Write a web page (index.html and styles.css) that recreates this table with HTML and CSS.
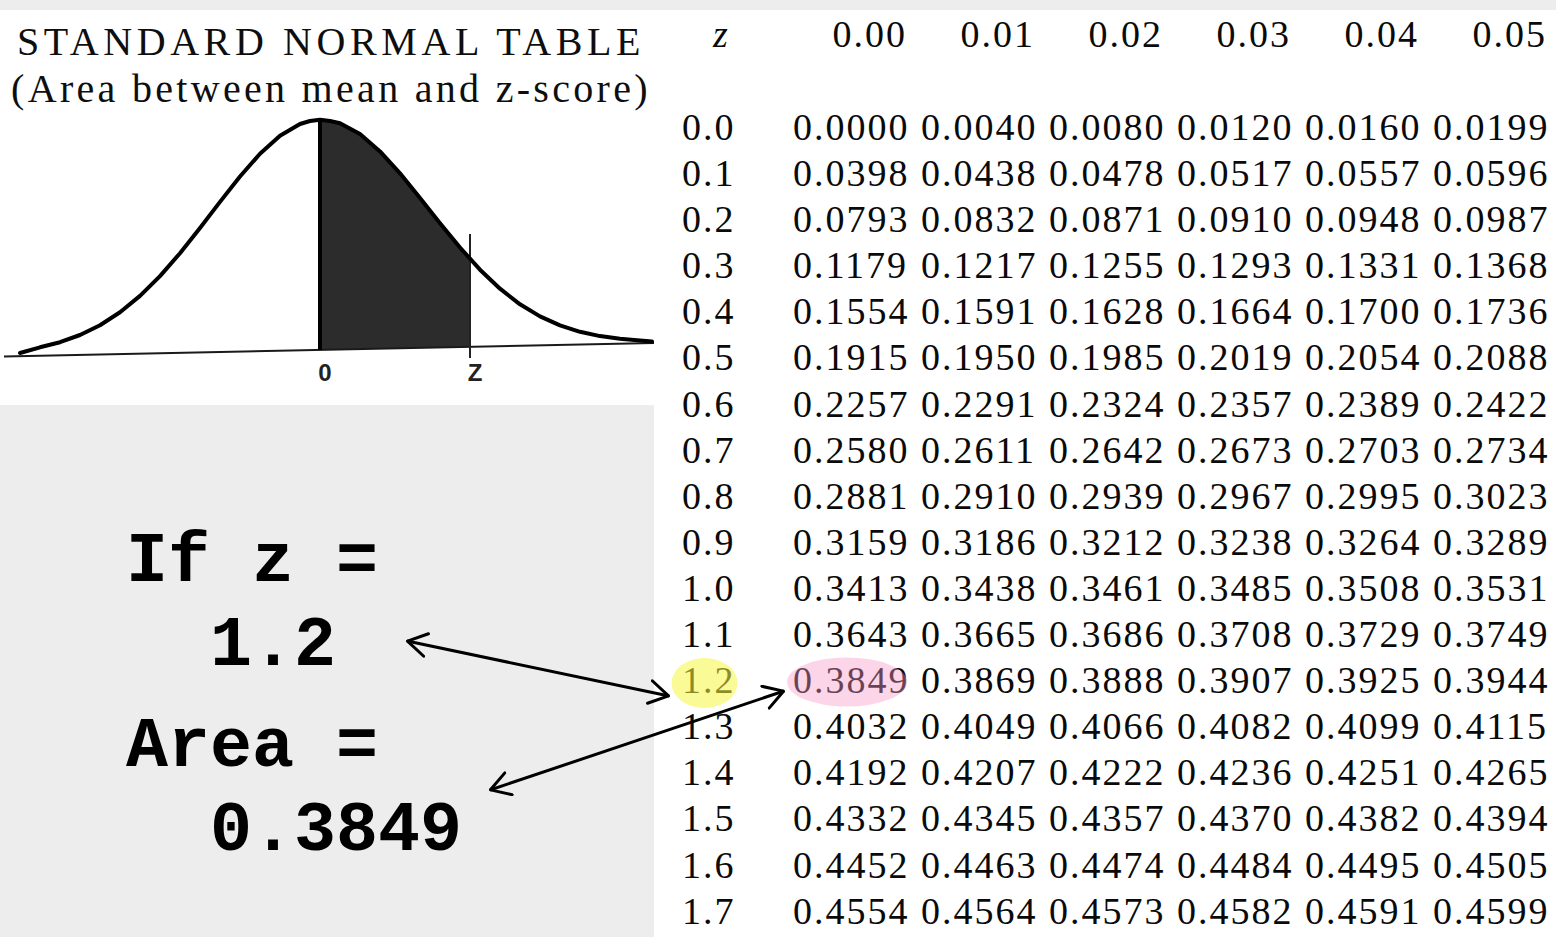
FILE: index.html
```html
<!DOCTYPE html>
<html lang="en">
<head>
    <meta charset="UTF-8">
    <meta name="viewport" content="width=device-width, initial-scale=1.0">
    <title>Standard Normal Table</title>
    <link rel="stylesheet" href="styles.css">
</head>
<body>
    <div class="page">
        <div class="left">
            <div class="figure">
                <h1 class="title">
                    <span class="title-main">STANDARD NORMAL TABLE</span>
                    <span class="title-sub">(Area between mean and z-score)</span>
                </h1>
                <svg class="curve" width="654" height="293" viewBox="0 112 654 293">
                    <!-- shaded area between 0 and z -->
                    <path class="shade" d="M320,349.7 L320,119.7 L340,123.2 L360,134.1 L380,151.4 L400,173.3 L420,197.9 L440,223.2 L460,247.6 L470,259 L470,346.7 Z"/>
                    <line class="axis" x1="4" y1="356.5" x2="654" y2="343"/>
                    <line class="mean-line" x1="320" y1="121" x2="320" y2="350"/>
                    <line class="z-line" x1="470" y1="234" x2="470" y2="358"/>
                    <polyline class="bell" points="20,353 40,347.3 60,342.2 80,335 100,325.2 120,312.3 140,295.9 160,276.1 180,253.2 200,228 220,201.9 240,176.5 260,153.8 280,135.7 300,124 310,121 320,119.7 330,121 340,123.2 360,134.1 380,151.4 400,173.3 420,197.9 440,223.2 460,247.6 480,269.7 500,288.7 520,304.3 540,316.4 560,325.4 580,331.8 600,336.1 620,338.8 640,340.4 652,341.5"/>
                    <text class="axis-label" x="325" y="381">0</text>
                    <text class="axis-label" x="475" y="381">Z</text>
                </svg>
            </div>
            <div class="example">
                <p class="example-group">If z =
  1.2</p>
                <p class="example-group">Area =
  0.3849</p>
            </div>
        </div>

        <div class="right">
            <div class="ztable">
                <div class="row head">
                    <span class="zlabel">z</span>
                    <span>0.00</span><span>0.01</span><span>0.02</span><span>0.03</span><span>0.04</span><span>0.05</span>
                </div>
                <div class="row"><span>0.0</span><span>0.0000</span><span>0.0040</span><span>0.0080</span><span>0.0120</span><span>0.0160</span><span>0.0199</span></div>
                <div class="row"><span>0.1</span><span>0.0398</span><span>0.0438</span><span>0.0478</span><span>0.0517</span><span>0.0557</span><span>0.0596</span></div>
                <div class="row"><span>0.2</span><span>0.0793</span><span>0.0832</span><span>0.0871</span><span>0.0910</span><span>0.0948</span><span>0.0987</span></div>
                <div class="row"><span>0.3</span><span>0.1179</span><span>0.1217</span><span>0.1255</span><span>0.1293</span><span>0.1331</span><span>0.1368</span></div>
                <div class="row"><span>0.4</span><span>0.1554</span><span>0.1591</span><span>0.1628</span><span>0.1664</span><span>0.1700</span><span>0.1736</span></div>
                <div class="row"><span>0.5</span><span>0.1915</span><span>0.1950</span><span>0.1985</span><span>0.2019</span><span>0.2054</span><span>0.2088</span></div>
                <div class="row"><span>0.6</span><span>0.2257</span><span>0.2291</span><span>0.2324</span><span>0.2357</span><span>0.2389</span><span>0.2422</span></div>
                <div class="row"><span>0.7</span><span>0.2580</span><span>0.2611</span><span>0.2642</span><span>0.2673</span><span>0.2703</span><span>0.2734</span></div>
                <div class="row"><span>0.8</span><span>0.2881</span><span>0.2910</span><span>0.2939</span><span>0.2967</span><span>0.2995</span><span>0.3023</span></div>
                <div class="row"><span>0.9</span><span>0.3159</span><span>0.3186</span><span>0.3212</span><span>0.3238</span><span>0.3264</span><span>0.3289</span></div>
                <div class="row"><span>1.0</span><span>0.3413</span><span>0.3438</span><span>0.3461</span><span>0.3485</span><span>0.3508</span><span>0.3531</span></div>
                <div class="row"><span>1.1</span><span>0.3643</span><span>0.3665</span><span>0.3686</span><span>0.3708</span><span>0.3729</span><span>0.3749</span></div>
                <div class="row"><span>1.2</span><span>0.3849</span><span>0.3869</span><span>0.3888</span><span>0.3907</span><span>0.3925</span><span>0.3944</span></div>
                <div class="row"><span>1.3</span><span>0.4032</span><span>0.4049</span><span>0.4066</span><span>0.4082</span><span>0.4099</span><span>0.4115</span></div>
                <div class="row"><span>1.4</span><span>0.4192</span><span>0.4207</span><span>0.4222</span><span>0.4236</span><span>0.4251</span><span>0.4265</span></div>
                <div class="row"><span>1.5</span><span>0.4332</span><span>0.4345</span><span>0.4357</span><span>0.4370</span><span>0.4382</span><span>0.4394</span></div>
                <div class="row"><span>1.6</span><span>0.4452</span><span>0.4463</span><span>0.4474</span><span>0.4484</span><span>0.4495</span><span>0.4505</span></div>
                <div class="row"><span>1.7</span><span>0.4554</span><span>0.4564</span><span>0.4573</span><span>0.4582</span><span>0.4591</span><span>0.4599</span></div>
            </div>
        </div>
    </div>

    <!-- highlights and arrows drawn over the table -->
    <svg class="overlay" width="1556" height="937" viewBox="0 0 1556 937">
        <defs>
            <marker id="head" viewBox="0 0 22 26" refX="21" refY="13" markerWidth="22" markerHeight="26" markerUnits="userSpaceOnUse" orient="auto-start-reverse">
                <path d="M1.5,1.5 L20.5,13 L1.5,24.5" fill="none" stroke="#000" stroke-width="3" stroke-linecap="round" stroke-linejoin="round"/>
            </marker>
        </defs>
        <ellipse class="mark-z" cx="704.5" cy="683" rx="33" ry="25"/>
        <ellipse class="mark-area" cx="847" cy="682" rx="60" ry="24.5"/>
        <line class="arrow" x1="407" y1="641" x2="669" y2="696" marker-start="url(#head)" marker-end="url(#head)"/>
        <line class="arrow" x1="490" y1="790" x2="784" y2="691" marker-start="url(#head)" marker-end="url(#head)"/>
    </svg>
</body>
</html>
```

FILE: styles.css
```css
body {
    margin: 0;
    padding: 0;
    background-color: #ededed;
    position: relative;
    width: 1556px;
    height: 937px;
    overflow: hidden;
}

.page {
    display: flex;
    padding-top: 10px;
    height: 927px;
}

.left {
    width: 654px;
    display: flex;
    flex-direction: column;
}

.figure {
    background: #fff;
    height: 395px;
}

.title {
    margin: 0;
    padding: 8px 0 0 8px;
    font-family: "Liberation Serif", "Times New Roman", serif;
    font-weight: normal;
    font-size: 40px;
    line-height: 47px;
    color: #0e0e0e;
    text-align: center;
    white-space: nowrap;
}

.title-main {
    display: block;
    letter-spacing: 4.6px;
}

.title-sub {
    display: block;
    letter-spacing: 3.3px;
}

.curve {
    display: block;
}

.curve .shade {
    fill: #2c2c2c;
}

.curve .bell {
    fill: none;
    stroke: #000;
    stroke-width: 4;
    stroke-linejoin: round;
    stroke-linecap: round;
}

.curve .axis {
    stroke: #1a1a1a;
    stroke-width: 2;
}

.curve .mean-line {
    stroke: #000;
    stroke-width: 4;
}

.curve .z-line {
    stroke: #222;
    stroke-width: 2;
}

.curve .axis-label {
    font-family: "Liberation Sans", Arial, sans-serif;
    font-size: 24px;
    font-weight: bold;
    fill: #222;
    text-anchor: middle;
}

.example {
    flex: 1;
    padding: 116px 0 0 126px;
}

.example-group {
    margin: 0 0 17px;
    white-space: pre;
    font-family: "Liberation Mono", "Courier New", monospace;
    font-weight: bold;
    font-size: 70px;
    line-height: 84px;
    color: #000;
}

.right {
    flex: 1;
    background: #fff;
    padding: 1px 0 0 28px;
    overflow: hidden;
}

.ztable {
    font-family: "Liberation Serif", "Times New Roman", serif;
    font-size: 38px;
    letter-spacing: 2px;
    color: #0a0a0a;
}

.row {
    display: grid;
    grid-template-columns: 97px repeat(6, 114px);
    column-gap: 14px;
    height: 46.1px;
    line-height: 46.1px;
    white-space: nowrap;
}

.row.head {
    height: 93px;
}

.row.head span {
    text-align: right;
}

.row.head .zlabel {
    text-align: left;
    padding-left: 31px;
    font-style: italic;
}

.overlay {
    position: absolute;
    top: 0;
    left: 0;
    pointer-events: none;
}

.mark-z {
    fill: rgb(246, 246, 64);
    opacity: 0.55;
}

.mark-area {
    fill: rgb(247, 152, 197);
    opacity: 0.4;
}

.arrow {
    stroke: #000;
    stroke-width: 3;
}
```
